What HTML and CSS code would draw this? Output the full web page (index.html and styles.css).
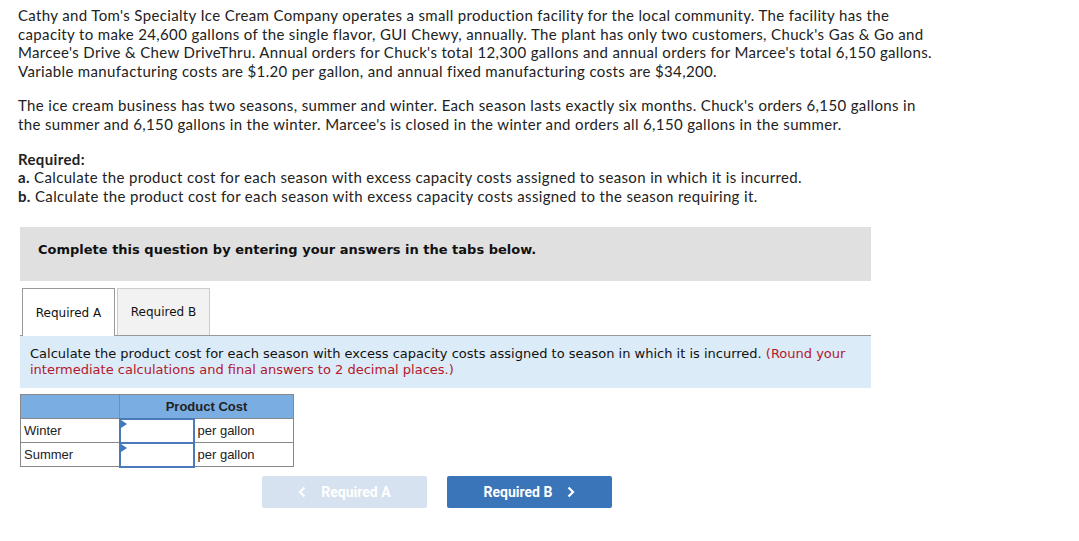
FILE: index.html
```html
<!DOCTYPE html>
<html>
<head>
<meta charset="utf-8">
<link rel="stylesheet" href="styles.css">
</head>
<body>
<div class="page">
  <div class="question">
    <p class="para">Cathy and Tom's Specialty Ice Cream Company operates a small production facility for the local community. The facility has the capacity to make 24,600 gallons of the single flavor, GUI Chewy, annually. The plant has only two customers, Chuck's Gas &amp; Go and Marcee's Drive &amp; Chew DriveThru. Annual orders for Chuck's total 12,300 gallons and annual orders for Marcee's total 6,150 gallons. Variable manufacturing costs are $1.20 per gallon, and annual fixed manufacturing costs are $34,200.</p>
    <p class="para">The ice cream business has two seasons, summer and winter. Each season lasts exactly six months. Chuck's orders 6,150 gallons in the summer and 6,150 gallons in the winter. Marcee's is closed in the winter and orders all 6,150 gallons in the summer.</p>
    <p class="para req"><b>Required:</b><br><b>a.</b> Calculate the product cost for each season with excess capacity costs assigned to season in which it is incurred.<br><b>b.</b> Calculate the product cost for each season with excess capacity costs assigned to the season requiring it.</p>
  </div>
  <div class="work">
    <div class="banner">Complete this question by entering your answers in the tabs below.</div>
    <div class="tabs">
      <div class="tab active">Required A</div>
      <div class="tab">Required B</div>
    </div>
    <div class="instr">Calculate the product cost for each season with excess capacity costs assigned to season in which it is incurred. <span class="hint">(Round your intermediate calculations and final answers to 2 decimal places.)</span></div>
    <table class="grid">
      <tr class="head"><th class="c1"></th><th colspan="2">Product Cost</th></tr>
      <tr><td class="c1">Winter</td><td class="inp"><span class="flag"></span></td><td class="unit">per gallon</td></tr>
      <tr><td class="c1">Summer</td><td class="inp"><span class="flag"></span></td><td class="unit">per gallon</td></tr>
    </table>
    <div class="nav">
      <button class="btn prev"><svg class="chev" width="8" height="12" viewBox="0 0 8 12"><path d="M6.5 1.5 L2 6 L6.5 10.5" fill="none" stroke="#fff" stroke-width="2.2"/></svg>Required A</button>
      <button class="btn next">Required B<svg class="chev" width="8" height="12" viewBox="0 0 8 12"><path d="M1.5 1.5 L6 6 L1.5 10.5" fill="none" stroke="#fff" stroke-width="2.2"/></svg></button>
    </div>
  </div>
</div>
</body>
</html>
```
FILE: styles.css
```css
html, body { margin: 0; padding: 0; background: #fff; }
.page { padding: 6px 0 0 18px; }
.question { width: 920px; font-family: Lato, "Open Sans", sans-serif; font-size: 15px; letter-spacing: 0.35px; line-height: 18.6px; color: #222; }
.para { margin: 0 0 16px 0; }
.req { margin-bottom: 0; }
.req b { font-weight: 700; color: #222; }
.work { margin: 22px 0 0 2px; width: 851px; }
.banner { background: #e0e0e0; height: 54px; box-sizing: border-box; padding: 15px 18px 0; font-family: "DejaVu Sans", Verdana, sans-serif; font-size: 13px; font-weight: bold; color: #111; }
.tabs { display: flex; gap: 2px; margin-top: 7px; padding-left: 2px; border-bottom: 1px solid #999; height: 47px; }
.tab { width: 93px; box-sizing: border-box; border: 1px solid #ccc; border-bottom: none; background: #f2f2f2; font-family: "DejaVu Sans", Verdana, sans-serif; font-size: 12px; color: #111; display: flex; align-items: center; justify-content: center; }
.tab.active { background: #fff; border-color: #999; margin-bottom: -1px; }
.instr { background: #dcebf8; padding: 10px; font-family: "DejaVu Sans", Verdana, sans-serif; font-size: 13px; line-height: 16px; color: #111; }
.hint { color: #b3182b; }
.grid { border-collapse: collapse; margin-top: 6px; font-family: "Liberation Sans", Arial, sans-serif; font-size: 13px; color: #222; }
.grid td, .grid th { border: 1px solid #888; height: 24px; padding: 0 3px; box-sizing: border-box; }
.grid .head th { background: #7aaee3; font-weight: bold; text-align: center; color: #222; }
.grid .c1 { width: 99px; }
.grid .inp { width: 74px; padding: 0; position: relative; border: 2px solid #4a7ab8; }
.grid .unit { width: 100px; }
.flag { position: absolute; left: 0; top: 0; width: 0; height: 0; border-top: 4px solid transparent; border-bottom: 4px solid transparent; border-left: 6px solid #3f78c0; }
.nav { display: flex; gap: 20px; margin: 8px 0 0 242px; }
.btn { width: 165px; height: 32px; border: none; border-radius: 2px; font-family: Roboto, "Liberation Sans", sans-serif; font-weight: bold; font-size: 14px; color: #fff; display: flex; align-items: center; justify-content: center; gap: 15px; padding: 0; }
.btn .chev { display: block; }
.prev { background: #d6e2f0; }
.next { background: #3a74b9; }
```
